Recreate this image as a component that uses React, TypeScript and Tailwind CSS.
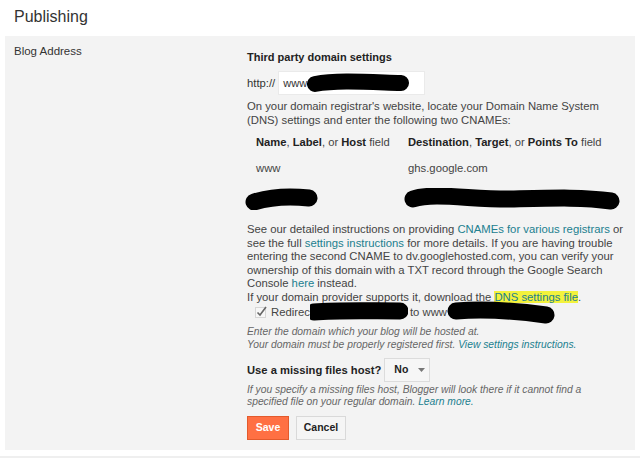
import React from "react";

const Scribble = ({ w, h, d, sw }: { w: number; h: number; d: string; sw: number }) => (
  <svg width={w} height={h} viewBox={`0 0 ${w} ${h}`} className="block shrink-0">
    <path d={d} fill="none" stroke="#000" strokeWidth={sw} strokeLinecap="round" strokeLinejoin="round" />
  </svg>
);

const Link = ({ children }: { children: React.ReactNode }) => (
  <span className="text-[#21808f]">{children}</span>
);

export default function App() {
  return (
    <div className="w-[640px] h-[459px] bg-white font-['Liberation_Sans',Arial,sans-serif] text-[#222] overflow-hidden">
      <div className="h-[36px] pl-[14px] pt-[8px] text-[16px] leading-[18px] text-[#333]">Publishing</div>
      <div className="mx-[5px] h-[414px] bg-[#f3f3f3] flex">
        <div className="w-[242px] pl-[9px] pt-[8px] text-[11.5px] leading-[14px] text-[#333]">Blog Address</div>
        <div className="flex-1 pt-[14px] text-[11.3px] text-[#444]">
          <div className="font-bold text-[11px] leading-[14px] text-[#222]">Third party domain settings</div>
          <div className="mt-[7px] flex items-center h-[24px]">
            <span className="text-[11.3px] text-[#333]">http://</span>
            <div className="ml-[3px] w-[147px] h-[24px] bg-white border border-[#eaeaea] flex items-center pl-[4px]">
              <span className="text-[11px] text-[#333]">www</span>
              <Scribble w={102} h={20} sw={16} d="M8 11 C 30 7, 60 9, 94 10" />
            </div>
          </div>
          <div className="mt-[5px] leading-[13.5px] whitespace-nowrap">
            On your domain registrar's website, locate your Domain Name System
            <br />
            (DNS) settings and enter the following two CNAMEs:
          </div>
          <div className="mt-[8px] flex leading-[14px] pl-[9px] text-[11.2px] whitespace-nowrap">
            <div className="w-[152px]">
              <b className="text-[#222]">Name</b>, <b className="text-[#222]">Label</b>, or <b className="text-[#222]">Host</b> field
            </div>
            <div>
              <b className="text-[#222]">Destination</b>, <b className="text-[#222]">Target</b>, or <b className="text-[#222]">Points To</b> field
            </div>
          </div>
          <div className="mt-[12px] flex leading-[14px] pl-[9px]">
            <div className="w-[152px]">www</div>
            <div>ghs.google.com</div>
          </div>
          <div className="mt-[13px] flex h-[22px] ml-[-2px]">
            <Scribble w={74} h={22} sw={17} d="M9 14 C 25 9, 45 8, 64 10" />
            <div className="w-[85px] shrink-0" />
            <Scribble w={216} h={22} sw={17} d="M9 11 C 30 4, 70 12, 110 11 S 180 9, 207 13" />
          </div>
          <div className="mt-[13px] leading-[13.5px] whitespace-nowrap">
            See our detailed instructions on providing <Link>CNAMEs for various registrars</Link> or
            <br />
            see the full <Link>settings instructions</Link> for more details. If you are having trouble
            <br />
            entering the second CNAME to dv.googlehosted.com, you can verify your
            <br />
            ownership of this domain with a TXT record through the Google Search
            <br />
            Console <Link>here</Link> instead.
            <br />
            If your domain provider supports it, download the{" "}
            <span className="bg-[#f3f23c] text-[#21808f]">DNS settings file</span>.
          </div>
          <div className="flex items-center h-[16px] pl-[8px]">
            <svg width="12" height="12" viewBox="0 0 12 12" className="shrink-0">
              <rect x="0.5" y="1.5" width="10" height="10" fill="#f7f7f7" stroke="#d6d6d6" />
              <path d="M2.5 6.5 L5 9 L11 1" fill="none" stroke="#666" strokeWidth="1.6" />
            </svg>
            <span className="ml-[4px] text-[#444]">Redirec</span>
            <Scribble w={98} h={20} sw={17} d="M4 10 C 30 8, 60 9, 90 9" />
            <span className="ml-[2px] text-[#444]">to www</span>
            <Scribble w={108} h={24} sw={17} d="M9 11 C 35 9, 70 11, 99 15" />
          </div>
          <div className="mt-[6px] italic text-[10.3px] leading-[12.5px] text-[#666] whitespace-nowrap">
            Enter the domain which your blog will be hosted at.
            <br />
            Your domain must be properly registered first. <Link>View settings instructions.</Link>
          </div>
          <div className="mt-[7px] flex items-center h-[24px]">
            <span className="font-bold text-[11.2px] text-[#222]">Use a missing files host?</span>
            <div className="ml-[3px] w-[46px] h-[24px] bg-[#f6f6f6] border border-[#dcdcdc] flex items-center pl-[9px]">
              <span className="font-bold text-[10.5px] text-[#222]">No</span>
              <svg width="7" height="4" viewBox="0 0 7 4" className="ml-[10px]">
                <path d="M0 0 L7 0 L3.5 4 Z" fill="#777" />
              </svg>
            </div>
          </div>
          <div className="mt-[2px] italic text-[10.3px] leading-[12px] text-[#666] whitespace-nowrap">
            If you specify a missing files host, Blogger will look there if it cannot find a
            <br />
            specified file on your regular domain. <Link>Learn more.</Link>
          </div>
          <div className="mt-[8px] flex gap-[7px]">
            <div className="w-[42px] h-[24px] bg-[#ff7043] border border-[#e35a2c] flex items-center justify-center text-white font-bold text-[10.5px]">
              Save
            </div>
            <div className="w-[50px] h-[24px] bg-[#f5f5f5] border border-[#d9d9d9] flex items-center justify-center text-[#222] font-bold text-[10.5px]">
              Cancel
            </div>
          </div>
        </div>
      </div>
      <div className="mt-[6px] h-[2px] bg-[#efefef]" />
    </div>
  );
}
